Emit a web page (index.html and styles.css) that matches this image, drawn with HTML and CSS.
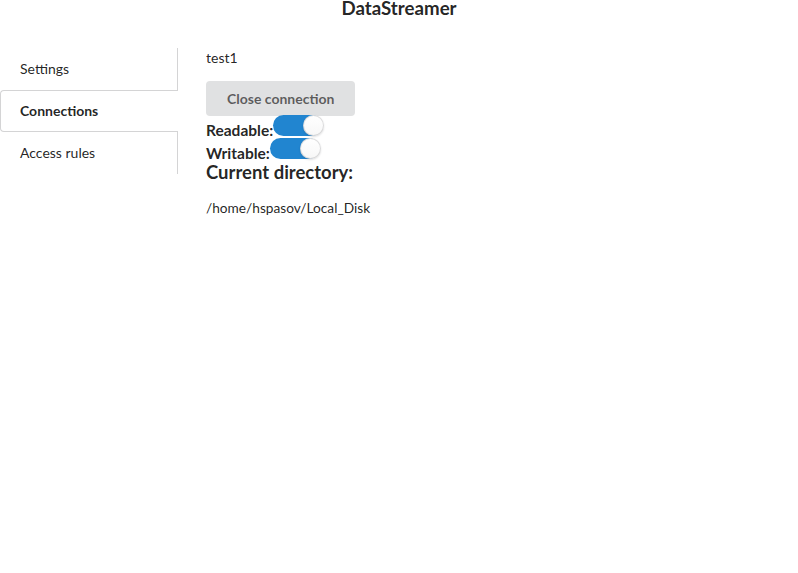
FILE: index.html
```html
<!DOCTYPE html>
<html>
<head>
<meta charset="utf-8">
<link rel="stylesheet" href="styles.css">
</head>
<body>
<header class="app-header">DataStreamer</header>
<div class="layout">
  <nav class="side-menu">
    <div class="menu-item">Settings</div>
    <div class="menu-item active">Connections</div>
    <div class="menu-item">Access rules</div>
  </nav>
  <main class="content">
    <p class="conn-name">test1</p>
    <button class="btn">Close connection</button>
    <div class="toggle-row"><span class="toggle-label">Readable:</span><span class="toggle on"><span class="knob"></span></span></div>
    <div class="toggle-row"><span class="toggle-label">Writable:</span><span class="toggle on"><span class="knob"></span></span></div>
    <h3 class="dir-title">Current directory:</h3>
    <p class="dir-path">/home/hspasov/Local_Disk</p>
  </main>
</div>
</body>
</html>
```

FILE: styles.css
```css
* { box-sizing: border-box; }
body {
  margin: 0;
  font-family: Lato, "Open Sans", sans-serif;
  font-size: 14px;
  line-height: 20px;
  color: rgba(0,0,0,0.87);
  background: #fff;
}
.app-header {
  text-align: center;
  font-weight: 700;
  font-size: 18.7px;
  line-height: 17px;
  height: 48px;
}
.layout {
  display: flex;
}
.side-menu {
  width: 178px;
  flex: none;
  display: flex;
  flex-direction: column;
  border-right: 1px solid #d4d4d5;
  align-self: flex-start;
}
.menu-item {
  height: 42px;
  padding: 0 0 0 19px;
  display: flex;
  align-items: center;
  border: 1px solid transparent;
  border-right: none;
  color: rgba(0,0,0,0.87);
}
.menu-item.active {
  font-weight: 700;
  border-color: #d4d4d5;
  border-radius: 4px 0 0 4px;
  background: #fff;
  margin-right: -1px;
  position: relative;
}
.content {
  padding-left: 28px;
}
.conn-name {
  margin: 0 0 13px;
}
.btn {
  display: block;
  font-family: Lato, sans-serif;
  font-size: 14px;
  font-weight: 700;
  line-height: 14px;
  padding: 11px 21px 10px;
  border: none;
  border-radius: 4px;
  background: #e0e1e2;
  color: rgba(0,0,0,0.6);
  margin: 0;
}
.toggle-row {
  display: flex;
  align-items: baseline;
  height: 23px;
  font-weight: 700;
  font-size: 15.5px;
  line-height: 18px;
}
.toggle-row:first-of-type {
  margin-top: -1px;
}
.toggle {
  position: relative;
  display: block;
  width: 49px;
  height: 21px;
  border-radius: 11px;
  background: #2185d0;
}
.knob {
  position: absolute;
  top: 0;
  left: 30px;
  width: 21px;
  height: 21px;
  border-radius: 50%;
  background: linear-gradient(#fff, #f7f7f7);
  box-shadow: 0 1px 2px 0 rgba(34,36,38,0.15), 0 0 0 1px rgba(34,36,38,0.15) inset;
}
.dir-title {
  margin: 0;
  font-size: 18.5px;
  line-height: 22px;
  font-weight: 700;
}
.dir-path {
  margin: 15px 0 0;
  font-size: 13.7px;
}
```
